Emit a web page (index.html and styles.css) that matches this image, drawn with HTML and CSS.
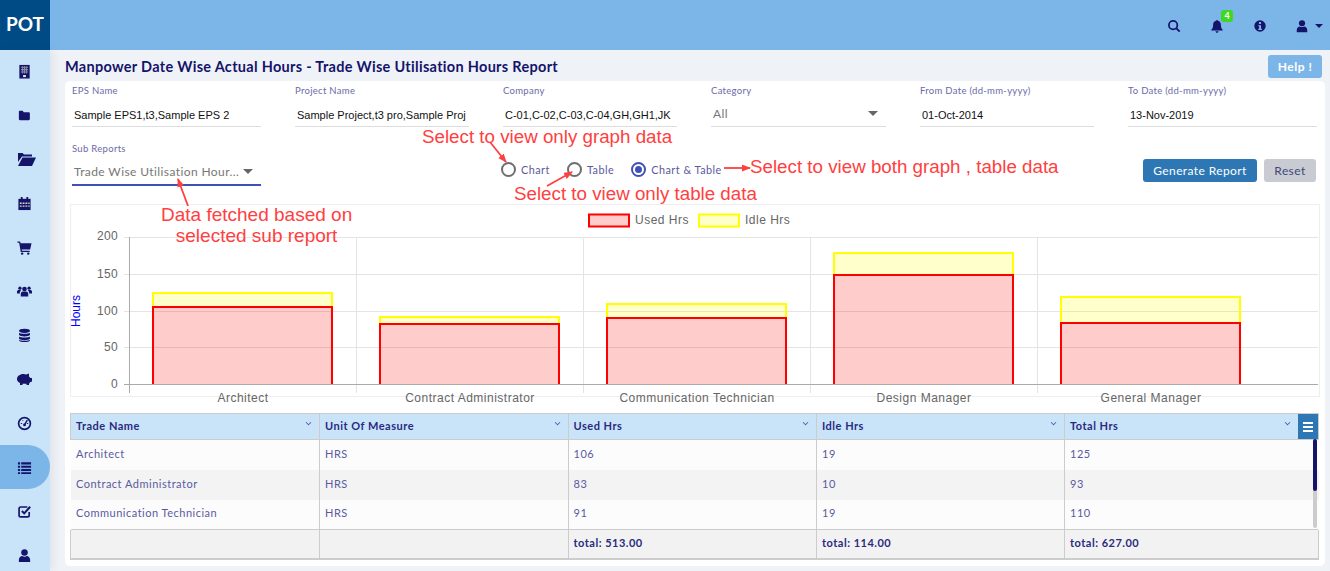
FILE: index.html
```html
<!DOCTYPE html>
<html lang="en">

<head>
    <meta charset="UTF-8">
    <meta name="viewport" content="width=device-width, initial-scale=1.0">
    <title>Manpower Report</title>
    <link rel="stylesheet" href="styles.css">
</head>

<body>
    <header class="topbar">
        <div class="logo">POT</div>
        <div class="top-icons">
            <svg class="top-icon" viewBox="0 0 16 16"><circle cx="7" cy="7" r="4.8" fill="none" stroke="#14146b" stroke-width="2"/><path d="M10.5 10.5l4 4" stroke="#14146b" stroke-width="2.2"/></svg>
            <span class="bell">
                <svg class="top-icon" viewBox="0 0 16 16"><path d="M8 1c.7 0 1 .5 1 1 2.400.5 3.500 2.500 3.500 5 0 3 1 4.200 2 5.200v.8h-13v-.8c1-1 2-2.200 2-5.200 0-2.500 1.100-4.500 3.500-5 0-.5.300-1 1-1zM6.300 14h3.400c0 1-.7 1.800-1.700 1.800s-1.700-.8-1.700-1.800z" fill="#14146b"/></svg>
                <span class="badge">4</span>
            </span>
            <svg class="top-icon" viewBox="0 0 16 16"><circle cx="8" cy="8" r="6.500" fill="#14146b"/><rect x="6.800" y="3.500" width="2.400" height="2.200" fill="#7cb6e8"/><path d="M6 7h3.200v4.200h1v1.300H6v-1.300h1V8.300H6z" fill="#7cb6e8"/></svg>
            <span class="user-menu">
                <svg class="top-icon" viewBox="0 0 16 16"><circle cx="8" cy="4.800" r="3.500" fill="#14146b"/><path d="M2 15v-2.500C2 10 4 8.500 5.500 8.500c1.600 1 3.400 1 5 0C12 8.500 14 10 14 12.500V15z" fill="#14146b"/></svg>
                <span class="caret"></span>
            </span>
        </div>
    </header>

    <div class="layout">
        <nav class="sidebar">
            <a class="nav-item"><svg viewBox="0 0 16 16"><rect x="2.500" y="1" width="11" height="14.500" fill="#14146b"/><path d="M4.200 3.500h7.600M4.200 6h7.600M4.200 8.500h7.600M6 2.500v7.500M8 2.500v7.500M10 2.500v7.500" stroke="#8d8d9e" stroke-width="1.100"/><rect x="6.500" y="11.800" width="3" height="2.200" fill="#e6e6f0"/></svg></a>
            <a class="nav-item"><svg viewBox="0 0 16 16"><path d="M2 4.200c0-.6.5-1.200 1.200-1.200H6l1.200 1.500h5.300c.7 0 1.200.5 1.200 1.200v6c0 .7-.5 1.300-1.200 1.300H3.200c-.7 0-1.200-.6-1.200-1.300z" fill="#14146b"/></svg></a>
            <a class="nav-item nav-wide nav-open"><svg viewBox="0 0 18 16"><path d="M0 2h4.500l1.500 1.500h8V5.500H4L0 11z" fill="#14146b"/><path d="M4.500 6.500H18L14 15H0z" fill="#14146b"/></svg></a>
            <a class="nav-item"><svg viewBox="0 0 16 16"><path d="M1.500 3h13v12h-13z" fill="#14146b"/><path d="M4 1h2v3H4zM10 1h2v3h-2z" fill="#14146b"/><path d="M3 7h2v1.500H3zM6 7h2v1.500H6zM9 7h2v1.500H9zM12 7h1.500v1.500H12zM3 10h2v1.500H3zM6 10h2v1.500H6zM9 10h2v1.500H9zM12 10h1.500v1.500H12z" fill="#d8d8b8"/></svg></a>
            <a class="nav-item"><svg viewBox="0 0 16 16"><path d="M.5 1.500h2.800l.5 2H15.500l-1.500 6.500H5l.3 1.500h8.200v1.300H4L2.300 2.800H.5z" fill="#14146b"/><circle cx="5.500" cy="14.500" r="1.300" fill="#14146b"/><circle cx="12" cy="14.500" r="1.300" fill="#14146b"/></svg></a>
            <a class="nav-item"><svg viewBox="0 0 18 16"><circle cx="9" cy="5" r="2.800" fill="#14146b"/><circle cx="3.500" cy="4" r="2" fill="#14146b"/><circle cx="14.500" cy="4" r="2" fill="#14146b"/><path d="M4.500 14v-3c0-2 1.500-3 2.500-3h4c1 0 2.500 1 2.500 3v3z" fill="#14146b"/><path d="M0 10.500V8c0-1 1-1.800 2-1.800h3L3.500 8.500v2zM18 10.500V8c0-1-1-1.800-2-1.800h-3l1.500 2.300v2z" fill="#14146b"/></svg></a>
            <a class="nav-item"><svg viewBox="0 0 16 16"><ellipse cx="8" cy="3" rx="5.800" ry="2.200" fill="#14146b"/><path d="M2.200 5c1 1.500 10.600 1.500 11.600 0v2.500c-1 2-10.600 2-11.600 0zM2.200 9c1 1.500 10.600 1.500 11.600 0v2.500c-1 2-10.600 2-11.600 0z" fill="#14146b"/><path d="M2.200 12.500c1 1.500 10.600 1.500 11.600 0v.8c-1 2.200-10.600 2.200-11.600 0z" fill="#14146b"/></svg></a>
            <a class="nav-item nav-wide"><svg viewBox="0 0 18 16"><path d="M2 7.500C2.500 4.500 5.500 3 8.500 3c1 0 2 .2 2.800.5L14 2.500v3l1.500 1.500h1.500v3.500l-2 .7-1 1.800V14h-2.500v-1.300h-4V14H5v-2C3 11 1.800 9.500 2 7.500z" fill="#14146b"/></svg></a>
            <a class="nav-item"><svg viewBox="0 0 16 16"><circle cx="8" cy="8" r="6.300" fill="none" stroke="#14146b" stroke-width="1.800"/><path d="M8 9.500l3-5" stroke="#14146b" stroke-width="1.500"/><circle cx="8" cy="9.500" r="1.500" fill="#14146b"/><path d="M4 8h1.500M10.500 8H12M6 4.500l.5.800" stroke="#14146b" stroke-width="1"/></svg></a>
            <a class="nav-item nav-active"><svg viewBox="0 0 16 16"><path d="M1 2.500h2.300v2.200H1zM4.500 2.500H15v2.200H4.500zM1 6h2.300v2.200H1zM4.500 6H15v2.200H4.500zM1 9.500h2.300v2.200H1zM4.500 9.500H15v2.200H4.500zM1 13h2.300v2H1zM4.500 13H15v2H4.500z" fill="#14146b"/></svg></a>
            <a class="nav-item"><svg viewBox="0 0 16 16"><path d="M13 8.500v3.500c0 1-.8 1.800-1.800 1.800H4c-1 0-1.800-.8-1.800-1.800V5C2.200 4 3 3.200 4 3.200h7" fill="none" stroke="#14146b" stroke-width="1.800"/><path d="M5.200 7.500l2.500 2.500 6.300-7" fill="none" stroke="#14146b" stroke-width="2.200"/></svg></a>
            <a class="nav-item"><svg viewBox="0 0 16 16"><circle cx="8" cy="4.800" r="3.500" fill="#14146b"/><path d="M2 15v-2.500C2 10 4 8.500 5.500 8.500c1.600 1 3.400 1 5 0C12 8.500 14 10 14 12.500V15z" fill="#14146b"/></svg></a>
        </nav>

        <main class="content">
            <div class="title-row">
                <h1>Manpower Date Wise Actual Hours - Trade Wise Utilisation Hours Report</h1>
                <button type="button" class="btn-help">Help !</button>
            </div>

            <section class="card">
                <div class="filter-row">
                    <div class="field">
                        <label>EPS Name</label>
                        <div class="field-value">Sample EPS1,t3,Sample EPS 2</div>
                    </div>
                    <div class="field">
                        <label>Project Name</label>
                        <div class="field-value">Sample Project,t3 pro,Sample Proj</div>
                    </div>
                    <div class="field">
                        <label>Company</label>
                        <div class="field-value">C-01,C-02,C-03,C-04,GH,GH1,JK</div>
                    </div>
                    <div class="field">
                        <label>Category</label>
                        <div class="field-value select-value">All<span class="select-arrow"></span></div>
                    </div>
                    <div class="field">
                        <label>From Date (dd-mm-yyyy)</label>
                        <div class="field-value">01-Oct-2014</div>
                    </div>
                    <div class="field">
                        <label>To Date (dd-mm-yyyy)</label>
                        <div class="field-value">13-Nov-2019</div>
                    </div>
                </div>

                <div class="options-row">
                    <div class="field field-sub">
                        <label>Sub Reports</label>
                        <div class="field-value select-value select-active">Trade Wise Utilisation Hour...<span class="select-arrow"></span></div>
                    </div>
                    <div class="radio-group">
                        <span class="radio"><i class="radio-dot"></i>Chart</span>
                        <span class="radio"><i class="radio-dot"></i>Table</span>
                        <span class="radio radio-on"><i class="radio-dot"></i>Chart &amp; Table</span>
                    </div>
                    <div class="actions">
                        <button type="button" class="btn-generate">Generate Report</button>
                        <button type="button" class="btn-reset">Reset</button>
                    </div>
                </div>

                <div class="chart-box">
                    <svg class="chart" viewBox="71 205 1248 192">
                        <g class="grid-lines">
                            <path d="M124 237.500H1318M124 274.500H1318M124 311.500H1318M124 347.500H1318"/>
                            <path d="M356.500 237V393M583.500 237V393M810.500 237V393M1037.500 237V393"/>
                            <path d="M129.500 237V393" class="grid-dark"/>
                        </g>

                        <rect x="589" y="214.500" width="40" height="12" class="bar-used"/>
                        <text x="635" y="224" class="legend-text">Used Hrs</text>
                        <rect x="699" y="214.500" width="40" height="12" class="bar-idle"/>
                        <text x="745" y="224" class="legend-text">Idle Hrs</text>

                        <text x="118" y="240" class="tick">200</text>
                        <text x="118" y="278" class="tick">150</text>
                        <text x="118" y="315" class="tick">100</text>
                        <text x="118" y="351" class="tick">50</text>
                        <text x="118" y="388" class="tick">0</text>
                        <text x="80" y="311" class="y-title" transform="rotate(-90 80 311)">Hours</text>

                        <path class="bar-idle" d="M153 307V293H332V307"/>
                        <path class="bar-used" d="M153 384V307H332V384"/>
                        <path class="bar-idle" d="M380 324V317H559V324"/>
                        <path class="bar-used" d="M380 384V324H559V384"/>
                        <path class="bar-idle" d="M607 318V304H786V318"/>
                        <path class="bar-used" d="M607 384V318H786V384"/>
                        <path class="bar-idle" d="M834 275V253H1013V275"/>
                        <path class="bar-used" d="M834 384V275H1013V384"/>
                        <path class="bar-idle" d="M1061 323V297H1240V323"/>
                        <path class="bar-used" d="M1061 384V323H1240V384"/>

                        <path class="axis" d="M124 384.500H1318"/>

                        <text x="243" y="402" class="cat">Architect</text>
                        <text x="470" y="402" class="cat">Contract Administrator</text>
                        <text x="697" y="402" class="cat">Communication Technician</text>
                        <text x="924" y="402" class="cat">Design Manager</text>
                        <text x="1151" y="402" class="cat">General Manager</text>
                    </svg>
                </div>

                <div class="table-wrap">
                    <table class="report-table">
                        <colgroup>
                            <col class="col-first">
                            <col class="col-wide">
                            <col class="col-wide">
                            <col class="col-fourth">
                            <col>
                        </colgroup>
                        <thead>
                            <tr>
                                <th>Trade Name<span class="sort"></span></th>
                                <th>Unit Of Measure<span class="sort"></span></th>
                                <th>Used Hrs<span class="sort"></span></th>
                                <th>Idle Hrs<span class="sort"></span></th>
                                <th class="th-last">Total Hrs<span class="sort"></span></th>
                            </tr>
                        </thead>
                        <tbody>
                            <tr><td>Architect</td><td>HRS</td><td>106</td><td>19</td><td>125</td></tr>
                            <tr><td>Contract Administrator</td><td>HRS</td><td>83</td><td>10</td><td>93</td></tr>
                            <tr><td>Communication Technician</td><td>HRS</td><td>91</td><td>19</td><td>110</td></tr>
                        </tbody>
                        <tfoot>
                            <tr><td></td><td></td><td>total: 513.00</td><td>total: 114.00</td><td>total: 627.00</td></tr>
                        </tfoot>
                    </table>
                    <span class="table-menu"><i></i><i></i><i></i></span>
                    <span class="scroll-track"><span class="scroll-thumb"></span></span>
                </div>
            </section>
        </main>
    </div>

    <!-- notes drawn on top of the screenshot -->
    <svg class="note-arrows" viewBox="0 0 1330 571">
        <defs>
            <marker id="head" markerWidth="10" markerHeight="8" refX="8" refY="3.5" orient="auto" markerUnits="userSpaceOnUse">
                <path d="M0 0L9 3.500L0 7z" fill="#ff4040"/>
            </marker>
        </defs>
        <path d="M490 142L506 162" marker-end="url(#head)"/>
        <path d="M547 186L572 172" marker-end="url(#head)"/>
        <path d="M724 168H750" marker-end="url(#head)"/>
        <path d="M188 206L178 179" marker-end="url(#head)"/>
    </svg>
    <span class="note note-graph">Select to view only graph data</span>
    <span class="note note-table">Select to view only table data</span>
    <span class="note note-both">Select to view both graph , table data</span>
    <span class="note note-sub">Data fetched based on<br>selected sub report</span>
</body>

</html>
```
FILE: styles.css
```css
* {
    box-sizing: border-box;
}

body {
    margin: 0;
    height: 571px;
    overflow: hidden;
    position: relative;
    background-color: #eff3f7;
    font-family: Lato, sans-serif;
    color: #14146b;
}

.topbar {
    display: flex;
    justify-content: space-between;
    align-items: center;
    height: 50px;
    background-color: #7cb6e8;
}

.logo {
    width: 50px;
    height: 50px;
    background-color: #004b85;
    color: #fff;
    font-size: 19px;
    font-weight: 700;
    line-height: 48px;
    text-align: center;
}

.top-icons {
    display: flex;
    align-items: center;
    gap: 29px;
    padding-right: 7px;
    padding-top: 1px;
}

.top-icon {
    display: block;
    width: 14px;
    height: 14px;
}

.bell {
    position: relative;
}

.badge {
    position: absolute;
    top: -9px;
    left: 11px;
    width: 12px;
    height: 12px;
    background-color: #3fd81e;
    border-radius: 3px;
    color: #fff;
    font-size: 9px;
    font-weight: 700;
    line-height: 11px;
    text-align: center;
}

.user-menu {
    display: flex;
    align-items: center;
    gap: 6px;
    margin-left: -1px;
}

.caret {
    border-left: 4px solid transparent;
    border-right: 4px solid transparent;
    border-top: 4px solid #14146b;
}

.layout {
    display: flex;
    height: 521px;
}

.sidebar {
    width: 50px;
    flex-shrink: 0;
    background-color: #c9e4f9;
    box-shadow: 4px 0 8px rgba(0, 0, 0, 0.06);
}

.nav-item {
    display: flex;
    justify-content: center;
    align-items: center;
    height: 44px;
    padding-right: 2px;
}

.nav-item:first-child {
    height: 43px;
}

.nav-item svg {
    width: 15px;
    height: 15px;
}

.nav-item.nav-wide svg {
    width: 18px;
    height: 16px;
}

.nav-item.nav-open {
    padding-right: 0;
    padding-left: 4px;
}

.nav-active {
    background-color: #7cb6e8;
    border-radius: 0 22px 22px 0;
}

.content {
    flex: 1;
    padding: 0 6px 0 15px;
}

.title-row {
    display: flex;
    justify-content: space-between;
    align-items: center;
    height: 31px;
    padding-top: 1px;
}

h1 {
    margin: 0;
    font-size: 14.5px;
    font-weight: 700;
    letter-spacing: 0.3px;
    color: #14146b;
}

.btn-help {
    width: 54px;
    height: 23px;
    margin-right: 3px;
    border: 0;
    border-radius: 3px;
    background-color: #7cb6e8;
    color: #fff;
    font-family: Lato, sans-serif;
    font-size: 12px;
    font-weight: 700;
    letter-spacing: 0.5px;
}

.card {
    height: 485px;
    padding: 5px 5px 0;
    background-color: #fff;
    border-radius: 5px;
}

.filter-row {
    display: grid;
    grid-template-columns: 189px 174px 174px 175px 174px 189px;
    column-gap: 34px;
    padding-left: 2px;
}

.field label {
    display: block;
    height: 15px;
    font-size: 9.5px;
    line-height: 10px;
    letter-spacing: 0.3px;
    color: #6a6aa8;
}

.field-value {
    position: relative;
    height: 26px;
    padding: 7px 2px 0;
    border-bottom: 1px solid #ddd;
    font-family: "Liberation Sans", sans-serif;
    font-size: 11px;
    line-height: 14px;
    color: #111;
    white-space: nowrap;
    overflow: hidden;
}

.select-value {
    padding-top: 6px;
    font-family: Lato, sans-serif;
    font-size: 12px;
    letter-spacing: 0.4px;
    color: #777;
}

.select-arrow {
    position: absolute;
    top: 10px;
    right: 8px;
    border-left: 5px solid transparent;
    border-right: 5px solid transparent;
    border-top: 5px solid #666;
}

.options-row {
    display: flex;
    align-items: flex-start;
    margin-top: 17px;
    padding-left: 2px;
}

.field-sub {
    width: 189px;
    flex-shrink: 0;
}

.field-sub label {
    height: 11px;
}

.select-active {
    height: 31px;
    padding-top: 10px;
    border-bottom: 2px solid #3f51b5;
}

.select-active .select-arrow {
    top: 14px;
}

.radio-group {
    display: flex;
    gap: 17px;
    margin-left: 240px;
    padding-top: 18px;
}

.radio {
    display: flex;
    align-items: center;
    gap: 5px;
    font-size: 10.8px;
    letter-spacing: 0.5px;
    color: #5a5aa0;
}

.radio-dot {
    position: relative;
    width: 15px;
    height: 15px;
    border: 2px solid #6e6e6e;
    border-radius: 50%;
}

.radio-on .radio-dot {
    border-color: #3f51b5;
}

.radio-on .radio-dot::after {
    content: "";
    position: absolute;
    top: 2px;
    left: 2px;
    width: 7px;
    height: 7px;
    background-color: #3f51b5;
    border-radius: 50%;
}

.actions {
    display: flex;
    gap: 7px;
    margin-left: auto;
    margin-right: 4px;
    padding-top: 15px;
}

.actions button {
    height: 23px;
    border: 0;
    border-radius: 3px;
    font-family: Lato, sans-serif;
    font-size: 12px;
    letter-spacing: 0.4px;
}

.btn-generate {
    width: 114px;
    background-color: #2e77b5;
    color: #fff;
}

.btn-reset {
    width: 52px;
    background-color: #c8ccd2;
    color: #45457a;
}

.chart-box {
    height: 193px;
    margin-top: 18px;
    border: 1px solid #eee;
}

.chart {
    display: block;
    width: 1248px;
    height: 192px;
    overflow: visible;
    font-family: "Liberation Sans", sans-serif;
}

.grid-lines path {
    fill: none;
    stroke: #e4e4e4;
}

.grid-lines .grid-dark {
    stroke: #aaa;
}

.axis {
    fill: none;
    stroke: #aaa;
}

.bar-used {
    fill: rgba(255, 0, 0, 0.2);
    stroke: #f00;
    stroke-width: 2;
}

.bar-idle {
    fill: rgba(255, 255, 0, 0.2);
    stroke: #ff0;
    stroke-width: 2;
}

.legend-text {
    font-size: 12px;
    letter-spacing: 0.5px;
    fill: #666;
}

.tick {
    font-size: 12px;
    letter-spacing: 0.3px;
    text-anchor: end;
    fill: #666;
}

.y-title {
    font-size: 12px;
    text-anchor: middle;
    fill: #00f;
}

.cat {
    font-size: 12px;
    letter-spacing: 0.5px;
    text-anchor: middle;
    fill: #666;
}

.table-wrap {
    position: relative;
    width: 1249px;
    margin-top: 16px;
}

.report-table {
    width: 100%;
    table-layout: fixed;
    border-collapse: collapse;
    font-size: 11px;
    letter-spacing: 0.5px;
    border: 1px solid #ccc;
    border-bottom-width: 2px;
}

.col-first {
    width: 249px;
}

.col-wide {
    width: 248.5px;
}

.col-fourth {
    width: 248px;
}

.report-table th {
    position: relative;
    height: 26px;
    padding: 0 5px 2px;
    background-color: #c9e4f9;
    border: 1px solid #ccc;
    color: #2a2a80;
    font-weight: 700;
    text-align: left;
}

.sort {
    position: absolute;
    top: 6px;
    right: 8px;
    width: 5px;
    height: 5px;
    border-right: 1px solid #4a4a9a;
    border-bottom: 1px solid #4a4a9a;
    transform: rotate(45deg) scale(0.8);
}

.th-last .sort {
    right: 28px;
}

.report-table td {
    height: 30px;
    padding: 0 5px 3px;
    border-left: 1px solid #ccc;
    border-right: 1px solid #ccc;
    color: #5a5aa0;
}

.report-table tbody td:first-child {
    border-left-color: transparent;
}

.report-table tbody td:last-child {
    border-right-color: transparent;
}

.report-table tbody tr:nth-child(odd) {
    background-color: #fcfcfc;
}

.report-table tbody tr:nth-child(even) {
    background-color: #f3f3f3;
}

.report-table tfoot td {
    height: 29px;
    padding-bottom: 2px;
    background-color: #f2f2f2;
    border-top: 1px solid #ccc;
    color: #2a2a80;
    font-weight: 700;
}

.table-menu {
    position: absolute;
    top: 1px;
    right: 1px;
    display: flex;
    flex-direction: column;
    justify-content: center;
    gap: 2px;
    width: 20px;
    height: 25px;
    padding: 0 5px;
    background-color: #2e77b5;
}

.table-menu i {
    display: block;
    height: 2px;
    background-color: #fff;
}

.scroll-track {
    position: absolute;
    top: 26px;
    right: 2px;
    width: 4px;
    height: 89px;
    background-color: #ccc;
    border-radius: 2px;
}

.scroll-thumb {
    display: block;
    height: 52px;
    background-color: #14146b;
    border-radius: 2px;
}

/* annotations */
.note-arrows {
    position: absolute;
    top: 0;
    left: 0;
    width: 1330px;
    height: 571px;
    pointer-events: none;
}

.note-arrows path {
    fill: none;
    stroke: #ff4040;
    stroke-width: 1.8;
}

.note-arrows marker path {
    fill: #ff4040;
    stroke: none;
}

.note {
    position: absolute;
    font-family: "Liberation Sans", sans-serif;
    font-size: 18.75px;
    line-height: 21px;
    color: #ff4040;
    white-space: nowrap;
}

.note-graph {
    top: 126px;
    left: 422px;
}

.note-table {
    top: 183px;
    left: 514px;
}

.note-both {
    top: 156px;
    left: 750px;
}

.note-sub {
    top: 204px;
    left: 161px;
    font-size: 19px;
    text-align: center;
}
```
